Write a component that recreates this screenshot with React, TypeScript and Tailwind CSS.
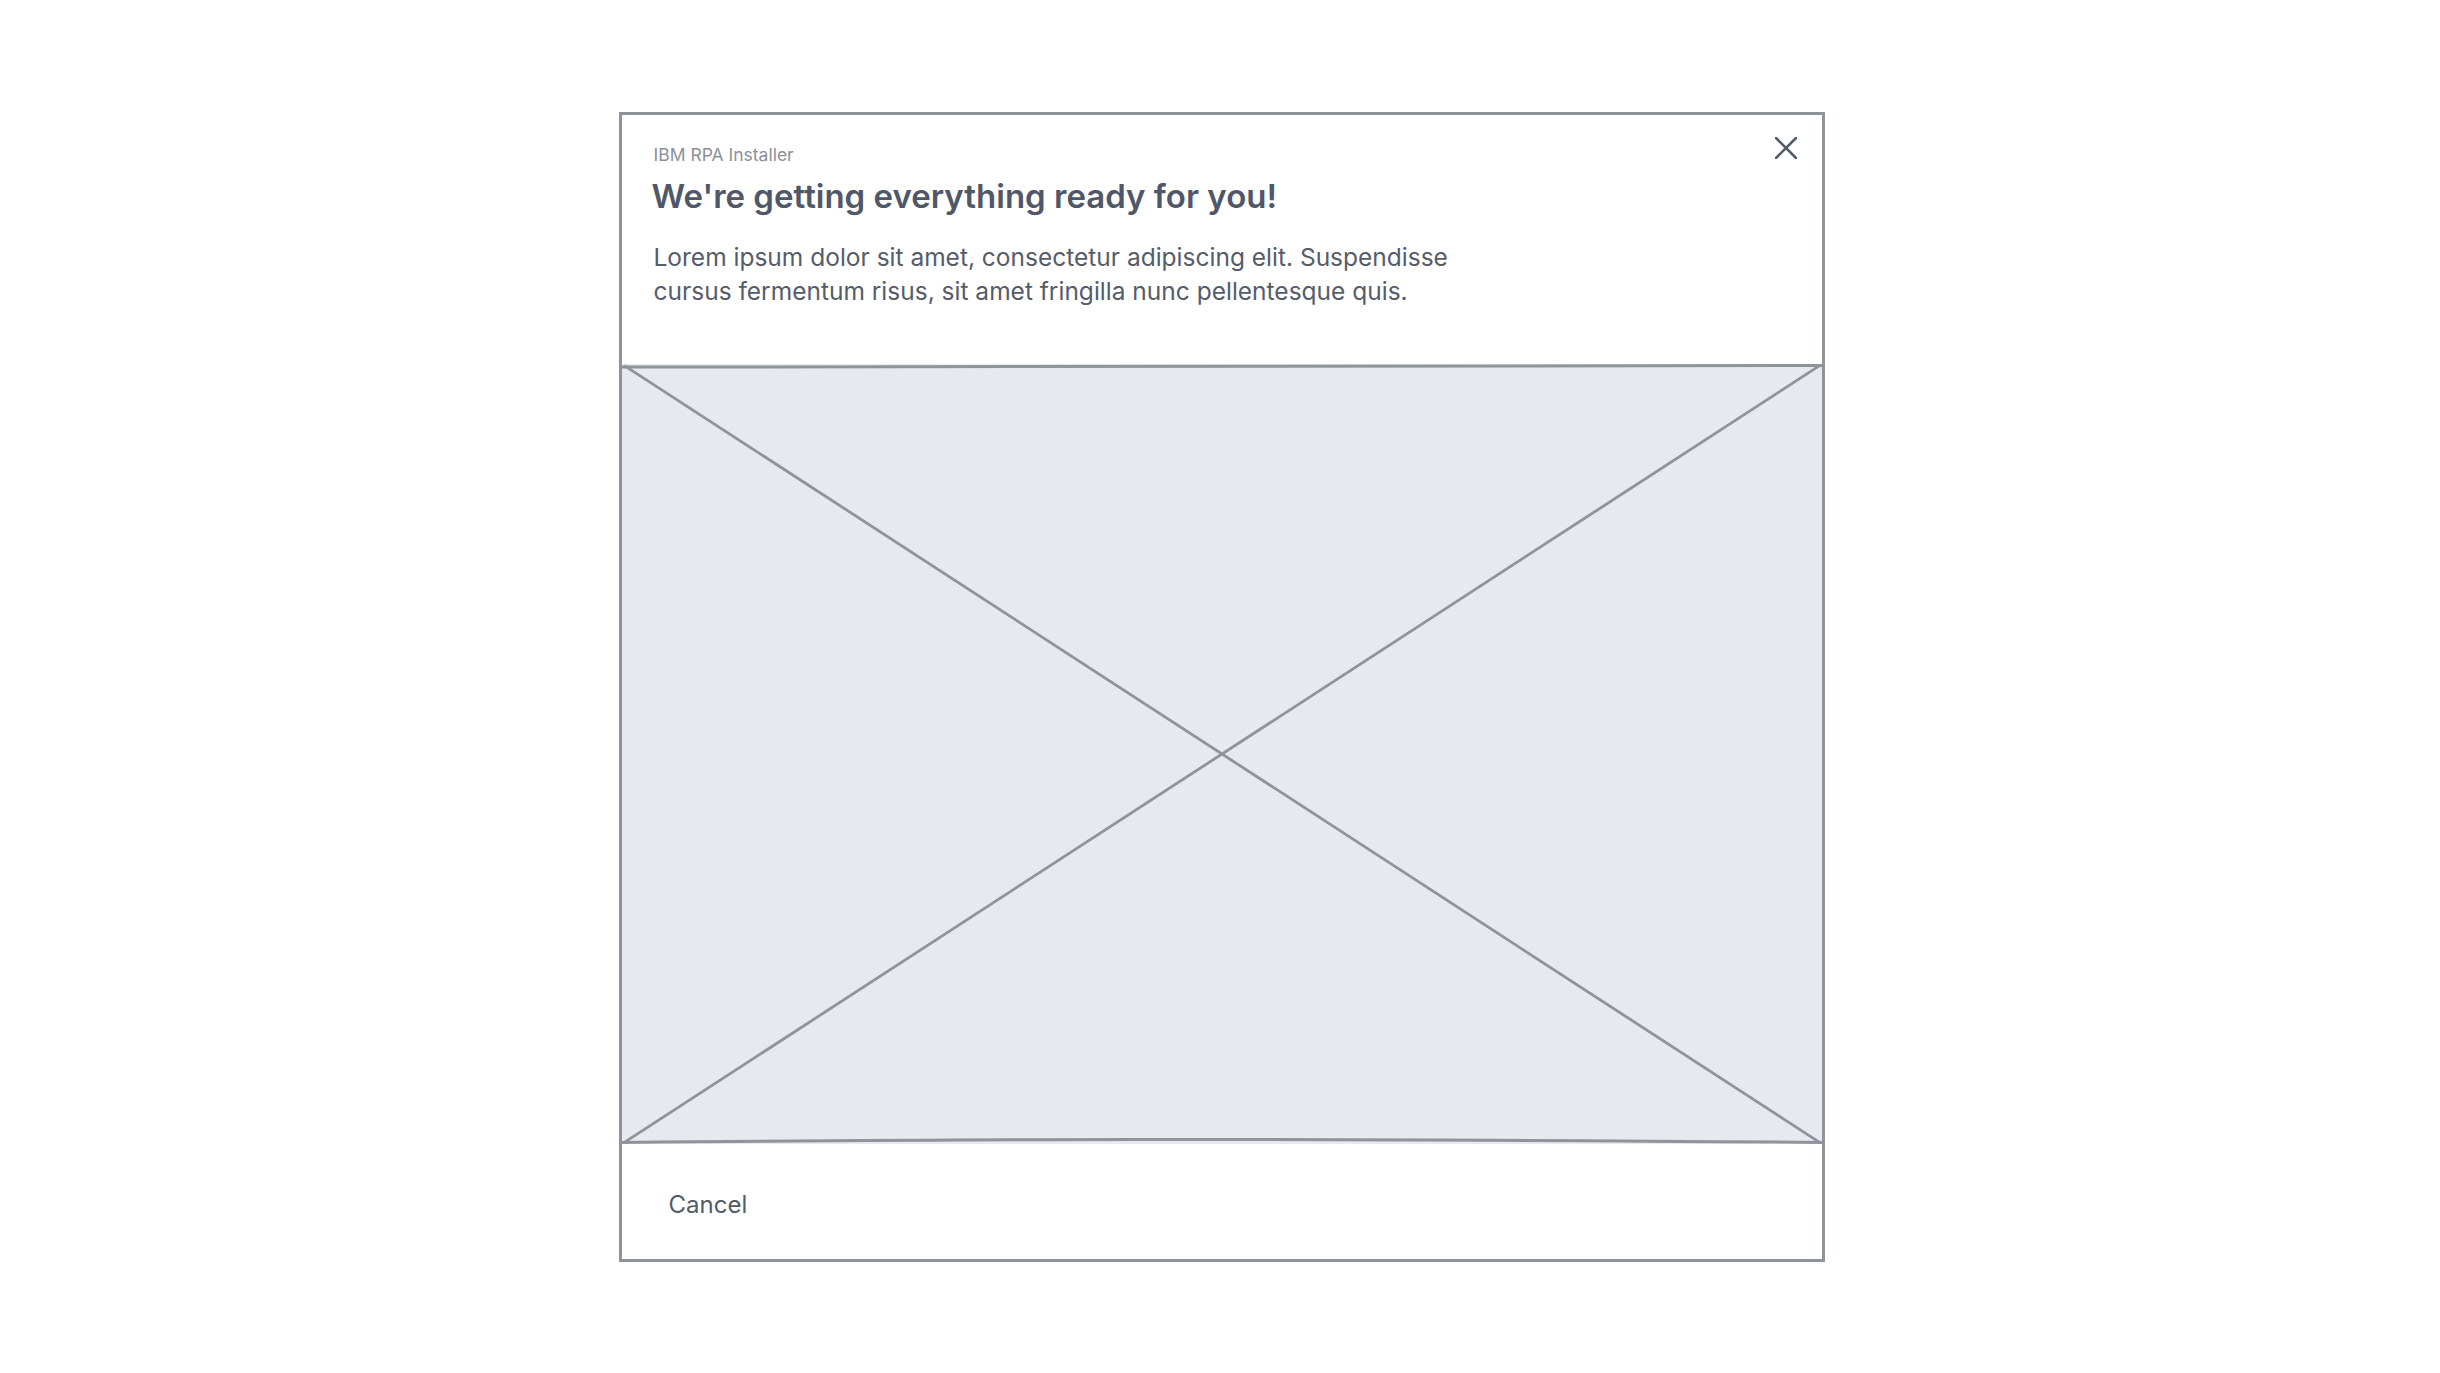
import React from "react";

function Placeholder() {
  return (
    <svg className="absolute inset-0 h-full w-full" viewBox="0 0 1000 1000" preserveAspectRatio="none">
      <path d="M0 4 C 300 0, 600 -2, 1000 2" stroke="#8e939d" strokeWidth="3" fill="none" vectorEffect="non-scaling-stroke" />
      <path d="M0 998 C 300 994, 500 992, 1000 998" stroke="#8e939d" strokeWidth="3" fill="none" vectorEffect="non-scaling-stroke" />
      <path d="M2 2 L 998 998" stroke="#8e939d" strokeWidth="2.8" fill="none" vectorEffect="non-scaling-stroke" />
      <path d="M2 998 L 998 2" stroke="#8e939d" strokeWidth="2.8" fill="none" vectorEffect="non-scaling-stroke" />
    </svg>
  );
}

export default function App() {
  return (
    <div
      className="flex h-[1373px] w-[2440px] items-center justify-center bg-white pl-[3px]"
      style={{ fontFamily: "Inter, 'Noto Sans', sans-serif" }}
    >
      <div className="flex h-[1150px] w-[1206px] flex-col border-[3px] border-[#8e939d] bg-white">
        <div className="relative flex h-[249px] flex-col pl-[32px] pt-[30px]">
          <div className="text-[17.5px] leading-[20px] text-[#8b909a]">IBM RPA Installer</div>
          <div className="-ml-[2px] mt-[11px] text-[33px] font-semibold leading-[40px] text-[#4f5769]">
            We're getting everything ready for you!
          </div>
          <p className="mt-[24px] w-[830px] text-[24.5px] leading-[34px] text-[#555c6a]">
            Lorem ipsum dolor sit amet, consectetur adipiscing elit. Suspendisse cursus fermentum risus, sit amet fringilla nunc pellentesque quis.
          </p>
          <button className="absolute right-[24px] top-[21px] flex h-[24px] w-[24px] items-center justify-center text-[#535a68]">
            <svg width="22" height="22" viewBox="0 0 22 22">
              <path d="M1 1 L21 21 M21 1 L1 21" stroke="currentColor" strokeWidth="2.6" strokeLinecap="round" />
            </svg>
          </button>
        </div>
        <div className="relative h-[780px] bg-[#e6e9ee]">
          <Placeholder />
        </div>
        <div className="flex flex-1 items-center pl-[47px] pt-[8px]">
          <span className="text-[24px] leading-[30px] text-[#535a68]">Cancel</span>
        </div>
      </div>
    </div>
  );
}
